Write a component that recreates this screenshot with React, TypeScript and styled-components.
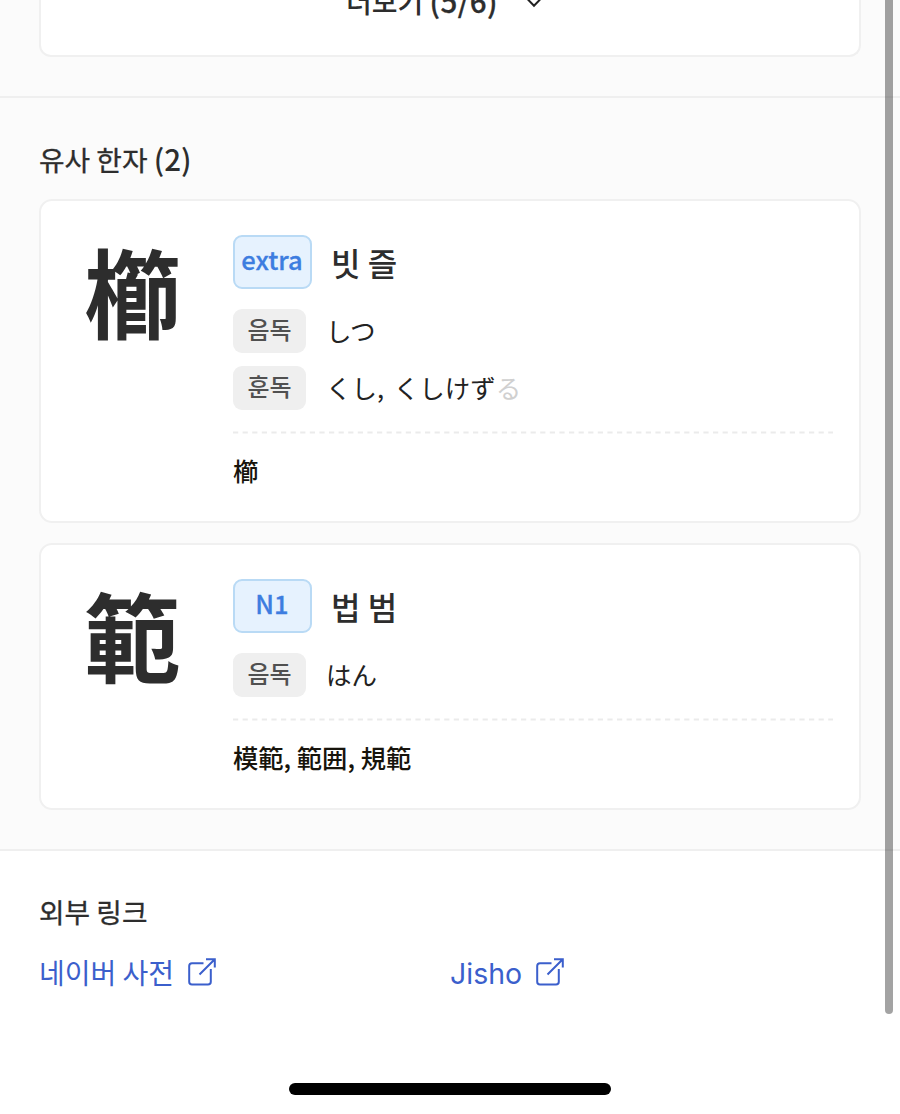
import React from "react";
import styled, { createGlobalStyle } from "styled-components";

const kr = `"Noto Sans CJK KR", "Noto Sans", sans-serif`;
const jp = `"Noto Sans CJK JP", "Noto Sans", sans-serif`;

const GlobalStyle = createGlobalStyle`
  * { box-sizing: border-box; }
  html, body { margin: 0; background: #fff; }
  body { font-family: ${kr}; color: #2d2d2d; overflow: hidden; }
  h2, p { margin: 0; }
`;

const Page = styled.main`
  position: relative;
  width: 900px;
  height: 1114px;
  overflow: hidden;
  display: flex;
  flex-direction: column;
  background: #fff;
`;

const Section = styled.section`
  background: #fbfbfb;
  border-bottom: 2px solid #efefef;
  padding: 0 39px 39px;
`;

const MoreCard = styled.div`
  height: 57px;
  display: flex;
  justify-content: center;
  align-items: flex-start;
  gap: 27px;
  padding-right: 11px;
  background: #fff;
  border: 2px solid #f0f0f0;
  border-top: 0;
  border-radius: 0 0 12px 12px;
  overflow: hidden;
`;

const MoreLabel = styled.span`
  height: 40px;
  margin-top: -20px;
  font-size: 28px;
  font-weight: 500;
  line-height: 40px;
`;

const MoreLatin = styled.span`
  font-size: 29.5px;
  letter-spacing: 0.5px;
  -webkit-text-stroke: 0.3px currentColor;
`;

const MoreChevron = styled.svg`
  margin-top: -5px;
`;

const Heading = styled.h2`
  font-size: 27.8px;
  font-weight: 400;
  line-height: 40px;
  -webkit-text-stroke: 0.3px currentColor;
`;

const Count = styled.span`
  font-size: 29.5px;
  font-weight: 500;
  -webkit-text-stroke: 0;
`;

const SimilarHeading = styled(Heading)`
  padding-top: 40px;
  height: 101px;
`;

const CardList = styled.div`
  display: flex;
  flex-direction: column;
  gap: 20px;
`;

const Card = styled.article`
  display: grid;
  grid-template-columns: 192px 1fr;
  padding: 33.5px 26px 31px 0;
  background: #fff;
  border: 2px solid #f0f0f0;
  border-radius: 13px;
`;

const Kanji = styled.div`
  padding-left: 43px;
  height: 120px;
  margin-top: -5.5px;
  font-family: ${jp};
  font-size: 96.5px;
  font-weight: 700;
  line-height: 120px;
`;

const TitleRow = styled.div`
  display: flex;
  align-items: flex-start;
  gap: 19px;
  height: 54px;
  margin-bottom: 20.5px;
`;

const Level = styled.span`
  width: 79px;
  height: 54px;
  border: 2px solid #b9daf5;
  border-radius: 9px;
  background: #e6f2fe;
  color: #3d7de0;
  font-size: 25.5px;
  font-weight: 500;
  line-height: 43px;
  text-align: center;
  text-indent: -1px;
  -webkit-text-stroke: 0.3px currentColor;
`;

const Meaning = styled.span`
  font-size: 32px;
  font-weight: 500;
  line-height: 55px;
`;

const ReadingRow = styled.div`
  display: flex;
  align-items: center;
  gap: 20px;
  height: 44px;
  & + & { margin-top: 13px; }
`;

const ReadingTag = styled.span`
  width: 73px;
  height: 44px;
  border-radius: 9px;
  background: #efefef;
  color: #505050;
  font-size: 24px;
  font-weight: 500;
  line-height: 40px;
  text-align: center;
`;

const Reading = styled.span`
  height: 44px;
  font-family: ${jp};
  font-size: 25.5px;
  line-height: 41px;
  word-spacing: 4px;
  color: #222;
`;

const Okurigana = styled.span`
  color: #d0d0d0;
`;

const Divider = styled.svg`
  display: block;
  margin-top: 20.5px;
`;

const Words = styled.p`
  margin-top: 17px;
  font-family: ${jp};
  font-size: 25.3px;
  font-weight: 500;
  line-height: 38px;
  height: 39.5px;
  color: #17140c;
`;

const LinksSection = styled.section`
  padding: 40px 39px 0;
`;

const Links = styled.div`
  display: grid;
  grid-template-columns: 1fr 1fr;
  margin-top: 20px;
`;

const Link = styled.a<{ $latin?: boolean }>`
  display: flex;
  align-items: center;
  gap: 14px;
  height: 42px;
  color: #3b5fcc;
  font-family: ${(p) => (p.$latin ? "Inter, sans-serif" : kr)};
  font-size: ${(p) => (p.$latin ? "28.5px" : "28px")};
  line-height: ${(p) => (p.$latin ? "45px" : "42px")};
  text-decoration: none;
`;

const LinkText = styled.span`
  height: 42px;
`;

const ScrollThumb = styled.div`
  position: absolute;
  right: 7px;
  top: -10px;
  width: 8px;
  height: 1024px;
  border-radius: 4px;
  background: rgba(0, 0, 0, 0.36);
`;

const HomeIndicator = styled.div`
  position: absolute;
  left: 289px;
  bottom: 19px;
  width: 322px;
  height: 12px;
  border-radius: 6px;
  background: #000;
`;

const ExternalIcon = () => (
  <svg width="28" height="28" viewBox="0 0 28 28" fill="none" stroke="currentColor" strokeWidth="2">
    <path d="M15.5 5.2H4Q1.2 5.2 1.2 8V23.8Q1.2 26.6 4 26.6H20Q22.8 26.6 22.8 23.8V11" />
    <path d="M11.5 16.5L26.5 1.5M18 1.2H26.8V9.5" />
  </svg>
);

type Entry = {
  kanji: string;
  level: string;
  meaning: string;
  readings: { tag: string; text: string; okurigana?: string }[];
  words: string;
};

const entries: Entry[] = [
  {
    kanji: "櫛",
    level: "extra",
    meaning: "빗 즐",
    readings: [
      { tag: "음독", text: "しつ" },
      { tag: "훈독", text: "くし, くしけず", okurigana: "る" },
    ],
    words: "櫛",
  },
  {
    kanji: "範",
    level: "N1",
    meaning: "법 범",
    readings: [{ tag: "음독", text: "はん" }],
    words: "模範, 範囲, 規範",
  },
];

const KanjiCard = ({ entry }: { entry: Entry }) => (
  <Card>
    <Kanji lang="ja">{entry.kanji}</Kanji>
    <div>
      <TitleRow>
        <Level>{entry.level}</Level>
        <Meaning>{entry.meaning}</Meaning>
      </TitleRow>
      {entry.readings.map((r) => (
        <ReadingRow key={r.tag}>
          <ReadingTag>{r.tag}</ReadingTag>
          <Reading lang="ja">
            {r.text}
            {r.okurigana && <Okurigana>{r.okurigana}</Okurigana>}
          </Reading>
        </ReadingRow>
      ))}
      <Divider width="600" height="3" viewBox="0 0 600 3">
        <path d="M0 1.5H600" stroke="#ebebeb" strokeWidth="2" strokeDasharray="5.2 4.4" />
      </Divider>
      <Words lang="ja">{entry.words}</Words>
    </div>
  </Card>
);

export default function App() {
  return (
    <>
      <GlobalStyle />
      <Page>
        <Section>
          <MoreCard>
            <MoreLabel>
              더보기 <MoreLatin>(5/6)</MoreLatin>
            </MoreLabel>
            <MoreChevron width="18" height="13" viewBox="0 0 18 13" fill="none" stroke="#222" strokeWidth="2">
              <path d="M1.5 3L9 10.8L16.5 3" />
            </MoreChevron>
          </MoreCard>
        </Section>
        <Section>
          <SimilarHeading>
            유사 한자 <Count>(2)</Count>
          </SimilarHeading>
          <CardList>
            {entries.map((e) => (
              <KanjiCard key={e.kanji} entry={e} />
            ))}
          </CardList>
        </Section>
        <LinksSection>
          <Heading>외부 링크</Heading>
          <Links>
            <Link>
              <LinkText>네이버 사전</LinkText>
              <ExternalIcon />
            </Link>
            <Link $latin>
              <LinkText>Jisho</LinkText>
              <ExternalIcon />
            </Link>
          </Links>
        </LinksSection>
        <ScrollThumb />
        <HomeIndicator />
      </Page>
    </>
  );
}
